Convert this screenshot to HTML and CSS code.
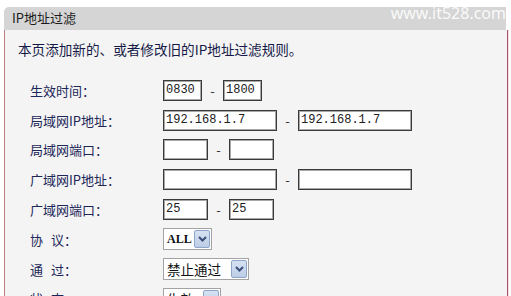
FILE: index.html
```html
<!DOCTYPE html>
<html lang="zh-CN">
<head>
<meta charset="utf-8">
<title>IP地址过滤</title>
<link rel="stylesheet" href="styles.css">
</head>
<body>
<div class="panel">
  <div class="head">IP地址过滤</div>
  <div class="watermark">www.it528.com</div>
  <div class="content">
    <p class="desc">本页添加新的、或者修改旧的IP地址过滤规则。</p>
    <div class="form">
      <div class="row">
        <span class="label">生效时间：</span>
        <span class="box w-time">0830</span><span class="dash">-</span><span class="box w-time">1800</span>
      </div>
      <div class="row">
        <span class="label">局域网IP地址：</span>
        <span class="box w-ip">192.168.1.7</span><span class="dash">-</span><span class="box w-ip">192.168.1.7</span>
      </div>
      <div class="row">
        <span class="label">局域网端口：</span>
        <span class="box w-port"></span><span class="dash">-</span><span class="box w-port"></span>
      </div>
      <div class="row">
        <span class="label">广域网IP地址：</span>
        <span class="box w-ip"></span><span class="dash">-</span><span class="box w-ip"></span>
      </div>
      <div class="row">
        <span class="label">广域网端口：</span>
        <span class="box w-port">25</span><span class="dash">-</span><span class="box w-port">25</span>
      </div>
      <div class="row">
        <span class="label spaced">协 议：</span>
        <span class="select s-proto"><span class="val latin">ALL</span><span class="arrow"><svg width="9" height="6" viewBox="0 0 9 6"><path d="M1 1 L4.5 4.5 L8 1" fill="none" stroke="#3a4f7a" stroke-width="2"/></svg></span></span>
      </div>
      <div class="row">
        <span class="label spaced">通 过：</span>
        <span class="select s-pass"><span class="val">禁止通过</span><span class="arrow"><svg width="9" height="6" viewBox="0 0 9 6"><path d="M1 1 L4.5 4.5 L8 1" fill="none" stroke="#3a4f7a" stroke-width="2"/></svg></span></span>
      </div>
      <div class="row">
        <span class="label spaced">状 态：</span>
        <span class="select s-state"><span class="val">生效</span><span class="arrow"><svg width="9" height="6" viewBox="0 0 9 6"><path d="M1 1 L4.5 4.5 L8 1" fill="none" stroke="#3a4f7a" stroke-width="2"/></svg></span></span>
      </div>
    </div>
  </div>
</div>
</body>
</html>
```
FILE: styles.css
```css
html, body {
  margin: 0;
  padding: 0;
  background: #ffffff;
  overflow: hidden;
}
body {
  font-family: "Noto Sans CJK SC", "DejaVu Sans", sans-serif;
  color: #1a2250;
}
.panel {
  position: relative;
  margin: 7px 0 0 4px;
  width: 504px;
}
.head {
  width: 494px;
  height: 23px;
  line-height: 22px;
  padding-left: 8px;
  background: #d5d5d5;
  border-top-left-radius: 5px;
  font-size: 13px;
  color: #1c1c1c;
}
.watermark {
  position: absolute;
  top: -5px;
  right: 2px;
  font-family: "Noto Sans", sans-serif;
  font-size: 16px;
  color: rgba(255, 255, 255, 0.9);
}
.content {
  height: 300px;
  background: #f4f4f4;
  border-left: 1px solid #c27a7a;
  border-right: 1px solid #a5566a;
  box-shadow: 1px 0 0 #f5dde1;
}
.desc {
  margin: 0;
  padding: 9px 0 0 13px;
  height: 20px;
  line-height: 20px;
  font-size: 13.6px;
  color: #141a48;
}
.form {
  padding: 16.5px 0 0 25px;
}
.row {
  display: flex;
  align-items: center;
  height: 29.8px;
}
.label {
  width: 133px;
  flex: none;
  font-size: 13px;
  color: #1c2658;
}
.label.spaced {
  word-spacing: 5px;
}
.box {
  box-sizing: border-box;
  height: 21px;
  background: #ffffff;
  border: 1px solid #3a3a3a;
  box-shadow: inset 0 0 0 1px #a8a8a8;
  font-family: "Liberation Mono", monospace;
  font-size: 12px;
  line-height: 19px;
  padding-left: 2px;
  color: #202020;
}
.w-time { width: 39px; }
.w-ip { width: 114px; }
.w-port { width: 45px; }
.dash {
  width: 21px;
  text-align: center;
  font-size: 13px;
  color: #333333;
}
.select {
  box-sizing: border-box;
  display: flex;
  align-items: center;
  justify-content: space-between;
  height: 22px;
  background: #ffffff;
  border: 1px solid #a3a3a3;
  padding: 1px 1px 1px 3px;
}
.s-proto { width: 49px; }
.s-pass { width: 86px; }
.s-state { width: 58px; }
.val {
  font-size: 13.5px;
  color: #111111;
  line-height: 18px;
}
.val.latin {
  font-family: "Liberation Serif", serif;
  font-weight: bold;
  font-size: 12px;
}
.arrow {
  box-sizing: border-box;
  display: flex;
  align-items: center;
  justify-content: center;
  width: 16px;
  height: 18px;
  background: linear-gradient(#d6e2f2, #bccde6);
  border: 1px solid #8ea5c9;
  border-radius: 2px;
}
```
